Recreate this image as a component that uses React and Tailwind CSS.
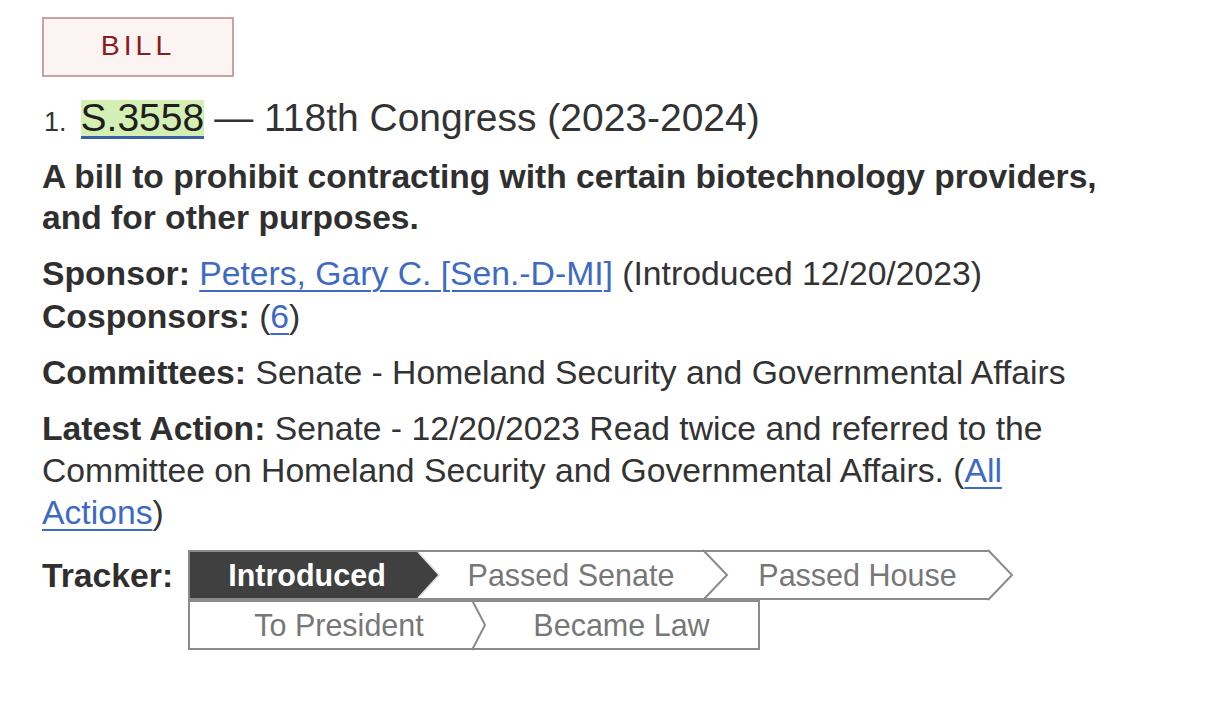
import React from "react";

const font = "font-['Liberation_Sans',Arial,Helvetica,sans-serif]";

function Chevron({ w, className = "" }) {
  return (
    <svg
      className={"absolute left-full top-[-2px] z-10 h-[50px] overflow-visible " + className}
      width={w}
      height="50"
      viewBox={`0 0 ${w} 50`}
    >
      <polyline points={`0,0 ${w},25 0,50`} fill="none" stroke="#8a8a8a" strokeWidth="2" />
    </svg>
  );
}

export default function App() {
  return (
    <div className={`${font} min-h-[710px] w-[1218px] bg-white px-[42px] pt-[17px] text-[#333]`}>
      <div className="flex h-[60px] w-[192px] items-center justify-center border-2 border-[#c9a3a3] bg-[#fcf3f3] pb-[3px] text-[28.5px] tracking-[4px] text-[#8b1c1c]">
        BILL
      </div>

      <div className="mt-[18px] flex items-baseline text-[39px] leading-[46px] text-[#333]">
        <span className="ml-[2px] mr-[14px] text-[27px]">1.</span>
        <span className="inline-block border-b-[3px] border-[#3d5fa8] bg-[#d4efb4] leading-[36px] text-[#1e1e1e]">
          S.3558
        </span>
        <span className="ml-[10px]">— 118th Congress (2023-2024)</span>
      </div>

      <div className="w-[1080px]">
        <p className="mt-[11px] text-[33.6px] font-bold leading-[41px] text-[#2f2f2f]">
          A bill to prohibit contracting with certain biotechnology providers, and for other purposes.
        </p>

        <div className="mt-[14px] text-[33.7px] leading-[43px]">
          <div>
            <span className="font-bold text-[#2f2f2f]">Sponsor:</span>{" "}
            <a className="text-[#3d6ac2] underline decoration-2 underline-offset-[5px]">
              Peters, Gary C. [Sen.-D-MI]
            </a>{" "}
            (Introduced 12/20/2023)
          </div>
          <div>
            <span className="font-bold text-[#2f2f2f]">Cosponsors:</span> (
            <a className="text-[#3d6ac2] underline decoration-2 underline-offset-[5px]">6</a>)
          </div>
        </div>

        <div className="mt-[13px] text-[33.7px] leading-[42px]">
          <span className="font-bold text-[#2f2f2f]">Committees:</span> Senate - Homeland Security and
          Governmental Affairs
        </div>

        <div className="mt-[14px] text-[33.7px] leading-[42px]">
          <span className="font-bold text-[#2f2f2f]">Latest Action:</span> Senate - 12/20/2023 Read twice
          and referred to the Committee on Homeland Security and Governmental Affairs. (
          <a className="text-[#3d6ac2] underline decoration-2 underline-offset-[5px]">All Actions</a>)
        </div>
      </div>

      <div className="mt-[17px] flex items-start">
        <div className="w-[146px] text-[33.7px] font-bold leading-[50px] text-[#2f2f2f]">Tracker:</div>
        <div className="flex flex-col text-[30.5px] leading-[46px] text-[#777]">
          <div className="flex h-[50px]">
            <div className="relative flex w-[230px] items-center justify-center border-y-2 border-l-2 border-[#8a8a8a] bg-[#404040] pl-[6px] font-bold text-white">
              Introduced
              <svg
                className="absolute left-full top-0 z-10 overflow-visible"
                width="21"
                height="46"
                viewBox="0 0 21 46"
              >
                <polygon points="0,0 21,23 0,46" fill="#404040" />
                <polyline points="0,0 21,23 0,46" fill="none" stroke="#dcdcdc" strokeWidth="1.5" />
              </svg>
            </div>
            <div className="relative flex w-[285px] items-center justify-center border-y-2 border-[#8a8a8a] pl-[21px]">
              Passed Senate
              <Chevron w={24} />
            </div>
            <div className="relative flex w-[285px] items-center justify-center border-y-2 border-[#8a8a8a] pl-[24px]">
              Passed House
              <Chevron w={24} />
            </div>
          </div>
          <div className="flex h-[50px]">
            <div className="relative flex w-[284px] items-center justify-center border-y-2 border-l-2 border-[#8a8a8a] pl-[16px]">
              To President
              <Chevron w={13} />
            </div>
            <div className="relative flex w-[288px] items-center justify-center border-y-2 border-r-2 border-[#8a8a8a] pl-[13px]">
              Became Law
            </div>
          </div>
        </div>
      </div>
    </div>
  );
}
